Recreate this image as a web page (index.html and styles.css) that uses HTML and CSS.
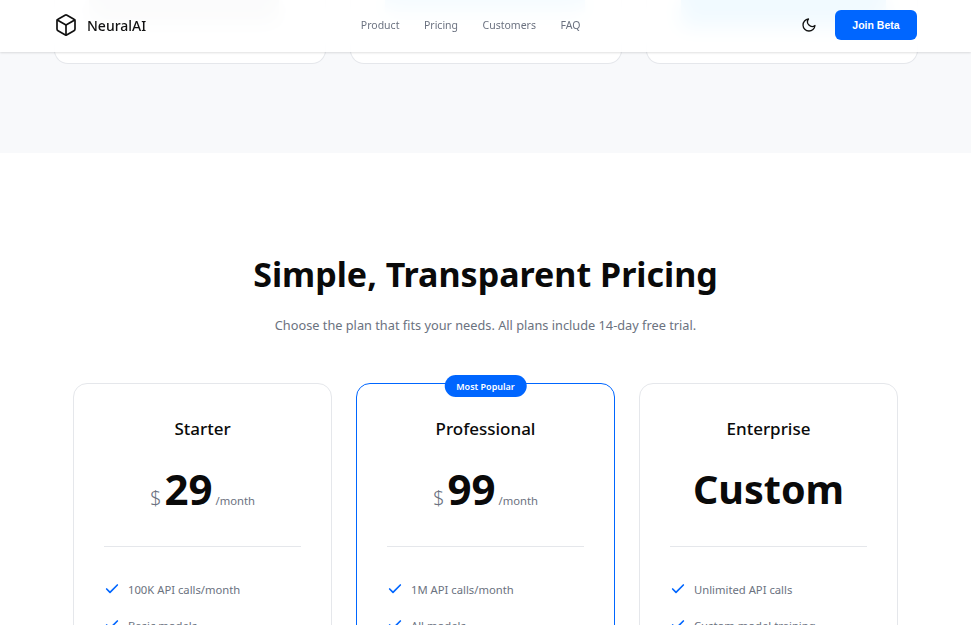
FILE: index.html
```html
<!DOCTYPE html>
<html lang="en">
<head>
  <meta charset="UTF-8">
  <title>NeuralAI</title>
  <link rel="stylesheet" href="styles.css">
</head>
<body>

  <header class="navbar">
    <a class="logo" href="#">
      <svg class="logo-icon" viewBox="0 0 24 24" fill="none" stroke="currentColor" stroke-width="1.7" stroke-linecap="round" stroke-linejoin="round">
        <path d="M21 16V8a2 2 0 0 0-1-1.73l-7-4a2 2 0 0 0-2 0l-7 4A2 2 0 0 0 3 8v8a2 2 0 0 0 1 1.73l7 4a2 2 0 0 0 2 0l7-4A2 2 0 0 0 21 16z"/>
        <path d="M3.27 6.96 12 12.01l8.73-5.05"/>
        <path d="M12 22.08V12"/>
      </svg>
      NeuralAI
    </a>
    <nav class="nav-links">
      <a href="#">Product</a>
      <a href="#">Pricing</a>
      <a href="#">Customers</a>
      <a href="#">FAQ</a>
    </nav>
    <div class="nav-actions">
      <svg class="moon-icon" viewBox="0 0 24 24" fill="none" stroke="currentColor" stroke-width="2" stroke-linecap="round" stroke-linejoin="round">
        <path d="M21 12.79A9 9 0 1 1 11.21 3 7 7 0 0 0 21 12.79z"/>
      </svg>
      <button class="join-btn">Join Beta</button>
    </div>
  </header>

  <section class="features">
    <div class="feature-card"><span class="blur-grey"></span></div>
    <div class="feature-card"><span class="blur-blue"></span></div>
    <div class="feature-card"><span class="blur-strong"></span></div>
  </section>

  <section class="pricing">
    <h2>Simple, Transparent Pricing</h2>
    <p class="subtitle">Choose the plan that fits your needs. All plans include 14-day free trial.</p>

    <div class="plans">
      <div class="plan">
        <h3>Starter</h3>
        <div class="price"><span class="currency">$</span><span class="amount">29</span><span class="period">/month</span></div>
        <ul>
          <li><svg class="check" viewBox="0 0 24 24"><path d="M20 6 9 17l-5-5"/></svg>100K API calls/month</li>
          <li><svg class="check" viewBox="0 0 24 24"><path d="M20 6 9 17l-5-5"/></svg>Basic models</li>
        </ul>
      </div>

      <div class="plan popular">
        <span class="badge">Most Popular</span>
        <h3>Professional</h3>
        <div class="price"><span class="currency">$</span><span class="amount">99</span><span class="period">/month</span></div>
        <ul>
          <li><svg class="check" viewBox="0 0 24 24"><path d="M20 6 9 17l-5-5"/></svg>1M API calls/month</li>
          <li><svg class="check" viewBox="0 0 24 24"><path d="M20 6 9 17l-5-5"/></svg>All models</li>
        </ul>
      </div>

      <div class="plan">
        <h3>Enterprise</h3>
        <div class="price"><span class="amount custom">Custom</span></div>
        <ul>
          <li><svg class="check" viewBox="0 0 24 24"><path d="M20 6 9 17l-5-5"/></svg>Unlimited API calls</li>
          <li><svg class="check" viewBox="0 0 24 24"><path d="M20 6 9 17l-5-5"/></svg>Custom model training</li>
        </ul>
      </div>
    </div>
  </section>

</body>
</html>
```

FILE: styles.css
```css
html, body {
  height: 100%;
  overflow: hidden;
}
body {
  margin: 0;
  font-family: "Noto Sans", sans-serif;
  background-color: white;
  color: #0a0a0a;
}

/* top bar stays over the scrolled page */
.navbar {
  position: fixed;
  top: 0;
  left: 0;
  right: 0;
  height: 52px;
  box-sizing: border-box;
  padding: 0 54px 2px 54px;
  display: flex;
  align-items: center;
  justify-content: space-between;
  background-color: rgba(255,255,255,0.9);
  backdrop-filter: blur(10px);
  box-shadow: 0 1px 2px rgba(0,0,0,0.12);
  z-index: 10;
}
.logo {
  display: flex;
  align-items: center;
  gap: 9px;
  font-size: 14px;
  font-weight: 500;
  color: #111;
  text-decoration: none;
}
.logo-icon {
  width: 24px;
  height: 24px;
}
.nav-links {
  display: flex;
  gap: 24.5px;
  margin-right: 6px;
}
.nav-links a {
  font-size: 10.5px;
  color: #6b7280;
  text-decoration: none;
}
.nav-actions {
  display: flex;
  align-items: center;
  gap: 18px;
}
.moon-icon {
  width: 16px;
  height: 16px;
  color: #111;
}
.join-btn {
  width: 82px;
  height: 30px;
  padding: 0;
  border: none;
  border-radius: 6px;
  background-color: #0066ff;
  color: white;
  font-family: "Liberation Sans", sans-serif;
  font-size: 10.5px;
  font-weight: bold;
  cursor: pointer;
}

.features {
  height: 153px;
  box-sizing: border-box;
  padding: 0 54px;
  display: grid;
  grid-template-columns: repeat(3, 272px);
  gap: 24px;
  background-color: #f8f9fb;
}
.feature-card {
  height: 64px;
  box-sizing: border-box;
  padding: 0 34px;
  background-color: white;
  border: 1px solid #e5e7eb;
  border-top: none;
  border-radius: 0 0 14px 14px;
  overflow: hidden;
}

/* what scrolled under the bar, only seen through its blur */
.blur-grey, .blur-blue, .blur-strong {
  display: block;
}
.blur-grey {
  width: 190px;
  height: 24px;
  background-color: #d4d6d9;
}
.blur-blue {
  width: 200px;
  height: 12px;
  background-color: #9ad8fa;
}
.blur-strong {
  width: 205px;
  height: 27px;
  background-color: #70c8f8;
}

.pricing {
  padding-top: 96px;
  text-align: center;
}
h2 {
  margin: 0;
  font-size: 34px;
  line-height: 50px;
  font-weight: 700;
}
.subtitle {
  margin: 16px 0 0;
  font-size: 12.75px;
  line-height: 20px;
  color: #6b7280;
}
.plans {
  margin: 48px 73px 0;
  display: grid;
  grid-template-columns: repeat(3, 259px);
  gap: 24px;
}
.plan {
  position: relative;
  height: 300px;
  box-sizing: border-box;
  padding: 31px 30px 0;
  border: 1px solid #e5e7eb;
  border-radius: 14px;
}
.popular {
  border-color: #0066ff;
}
.badge {
  position: absolute;
  top: -9px;
  left: 50%;
  transform: translateX(-50%);
  height: 22px;
  padding: 0 12px;
  border-radius: 11px;
  background-color: #0066ff;
  color: white;
  font-size: 9px;
  font-weight: 600;
  line-height: 23px;
  white-space: nowrap;
}
h3 {
  margin: 0;
  font-size: 17px;
  line-height: 28px;
  font-weight: 500;
}
.price {
  margin-top: 21px;
  height: 50px;
  padding-bottom: 32px;
  border-bottom: 1px solid #e5e7eb;
  display: flex;
  justify-content: center;
  align-items: baseline;
}
.currency {
  font-size: 20px;
  font-weight: 300;
  color: #6b7280;
  margin-right: 3px;
}
.amount {
  font-size: 42px;
  line-height: 50px;
  font-weight: 700;
}
.custom {
  font-size: 39.5px;
}
.period {
  font-size: 11.25px;
  color: #6b7280;
  margin-left: 3px;
}
ul {
  margin: 32px 0 0;
  padding: 0;
  list-style: none;
}
li {
  display: flex;
  align-items: center;
  gap: 8px;
  height: 20px;
  margin-bottom: 16px;
  font-size: 11.25px;
  color: #6b7280;
  text-align: left;
}
.check {
  width: 16px;
  height: 16px;
  fill: none;
  stroke: #0066ff;
  stroke-width: 2.5;
  stroke-linecap: round;
  stroke-linejoin: round;
}
```
